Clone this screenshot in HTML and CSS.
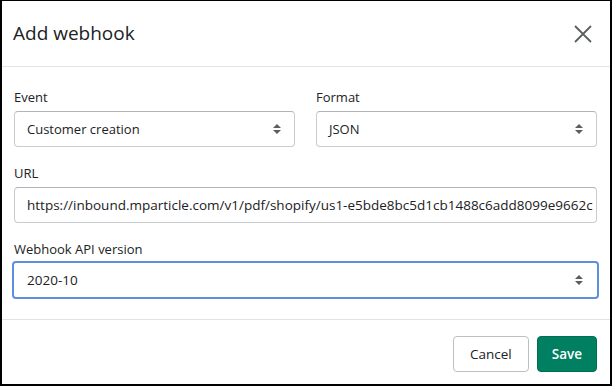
FILE: index.html
```html
<!DOCTYPE html>
<html lang="en">
<head>
  <meta charset="UTF-8" />
  <title>Add webhook</title>
  <link rel="stylesheet" href="styles.css">
</head>
<body>
  <div class="modal">
    <!-- Header -->
    <div class="modal-header">
      <h1>Add webhook</h1>
      <button class="close" aria-label="Close">
        <svg width="18" height="18" viewBox="0 0 18 18">
          <path d="M1 1 L17 17 M17 1 L1 17" stroke="#5c5f62" stroke-width="1.8" fill="none"/>
        </svg>
      </button>
    </div>

    <!-- Form -->
    <div class="modal-body">
      <div class="row">
        <div class="field">
          <label>Event</label>
          <div class="select">
            <span>Customer creation</span>
            <span class="arrows"></span>
          </div>
        </div>
        <div class="field">
          <label>Format</label>
          <div class="select">
            <span>JSON</span>
            <span class="arrows"></span>
          </div>
        </div>
      </div>
      <div class="field">
        <label>URL</label>
        <div class="input">https://inbound.mparticle.com/v1/pdf/shopify/us1-e5bde8bc5d1cb1488c6add8099e9662c</div>
      </div>
      <div class="field">
        <label>Webhook API version</label>
        <div class="select focused">
          <span>2020-10</span>
          <span class="arrows"></span>
        </div>
      </div>
    </div>

    <!-- Footer -->
    <div class="modal-footer">
      <button class="btn">Cancel</button>
      <button class="btn primary">Save</button>
    </div>
  </div>
</body>
</html>
```

FILE: styles.css
```css
* {
  margin: 0;
  padding: 0;
  box-sizing: border-box;
}
html, body {
  width: 612px;
  height: 386px;
  font-family: 'Open Sans', 'Noto Sans', sans-serif;
  color: #202223;
  background: #fff;
}
.modal {
  width: 612px;
  height: 386px;
  border-style: solid;
  border-color: #000;
  border-width: 1px 2px 2px 2px;
  display: flex;
  flex-direction: column;
}
.modal-header {
  height: 66px;
  flex-shrink: 0;
  display: flex;
  align-items: center;
  justify-content: space-between;
  padding: 0 18px 0 11px;
  border-bottom: 1px solid #e1e3e5;
}
.modal-header h1 {
  font-size: 19px;
  font-weight: 400;
  margin-bottom: 2px;
}
.close {
  background: none;
  border: none;
  width: 18px;
  height: 18px;
  cursor: pointer;
}
.modal-body {
  padding: 21px 13px 0 12px;
  height: 253px;
  flex-shrink: 0;
  border-bottom: 1px solid #e1e3e5;
}
.row {
  display: flex;
  gap: 21px;
}
.row .field {
  flex: 1;
}
.field {
  margin-bottom: 17px;
}
label {
  display: block;
  font-size: 13px;
  line-height: 18px;
  margin-bottom: 5px;
}
.select, .input {
  height: 36px;
  border: 1px solid #c9cccf;
  border-top-color: #aeb4b9;
  border-radius: 4px;
  font-size: 13.5px;
  display: flex;
  align-items: center;
  padding: 0 12px;
  white-space: nowrap;
  overflow: hidden;
}
.row .select span:first-child {
  font-size: 13px;
}
.select {
  justify-content: space-between;
  padding-right: 13px;
}
.input {
  text-overflow: clip;
  padding-right: 3px;
}
.select.focused {
  border: 2px solid #5c8fe0;
  margin: -2px -2px 0;
  height: 38px;
  padding-left: 13px;
  padding-right: 14px;
}
.arrows {
  display: flex;
  flex-direction: column;
  gap: 2px;
}
.arrows::before, .arrows::after {
  content: '';
  display: block;
  width: 0;
  height: 0;
  border-left: 4px solid transparent;
  border-right: 4px solid transparent;
}
.arrows::before {
  border-bottom: 4px solid #5c5f62;
}
.arrows::after {
  border-top: 4px solid #5c5f62;
}
.modal-footer {
  flex: 1;
  display: flex;
  justify-content: flex-end;
  align-items: center;
  gap: 8px;
  padding: 4px 13px 0 0;
}
.btn {
  height: 36px;
  padding: 0 16px;
  border: 1px solid #babfc3;
  border-radius: 4px;
  background: #fff;
  font-family: inherit;
  font-size: 13.5px;
  color: #202223;
  cursor: pointer;
}
.btn.primary {
  background: #008060;
  border-color: #006e52;
  color: #fff;
  font-weight: 600;
  padding: 0 14px;
}
```
